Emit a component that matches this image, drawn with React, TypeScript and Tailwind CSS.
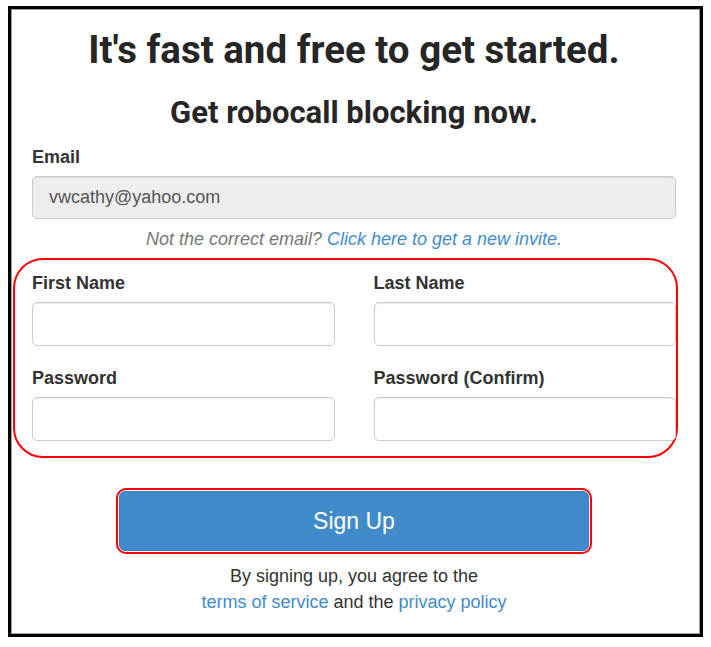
import React from "react";

const sans = { fontFamily: '"Liberation Sans", Arial, sans-serif' };

function Field({ label, mt }: { label: string; mt?: boolean }) {
  return (
    <div className={mt ? "mt-[22px]" : ""}>
      <div className="text-[18px] leading-[20px] font-bold text-[#333]">{label}</div>
      <input
        type="text"
        className="mt-[9px] block h-[44px] w-full rounded-[5px] border border-[#ccc] bg-white px-4 shadow-[inset_0_1px_1px_rgba(0,0,0,0.075)] outline-none"
      />
    </div>
  );
}

export default function App() {
  return (
    <div className="bg-white w-[711px] h-[647px] pt-[6px] pl-[8px]" style={sans}>
      <div className="w-[695px] h-[631px] border-[3px] border-black">
        <div className="h-full border border-[#a0a0a0] pl-[20px] pr-[23px] pt-[18px] flex flex-col">
          <h1
            className="text-center text-[38.5px] leading-[44px] font-bold text-[#262626]"
            style={{ fontFamily: 'Roboto, "Liberation Sans", sans-serif' }}
          >
            It's fast and free to get started.
          </h1>
          <h2
            className="mt-[23px] text-center text-[31px] leading-[36px] font-bold text-[#262626]"
            style={{ fontFamily: 'Roboto, "Liberation Sans", sans-serif' }}
          >
            Get robocall blocking now.
          </h2>
          <div className="mt-[16px] text-[18px] leading-[20px] font-bold text-[#333]">Email</div>
          <div className="mt-[9px] h-[43px] rounded-[5px] border border-[#ccc] bg-[#eee] px-[16px] flex items-center text-[18px] text-[#555] shadow-[inset_0_1px_1px_rgba(0,0,0,0.075)]">
            vwcathy@yahoo.com
          </div>
          <div className="mt-[10px] text-center text-[18px] leading-[20px] italic text-[#777]">
            Not the correct email? <span className="text-[#428bca]">Click here to get a new invite.</span>
          </div>
          <div className="mt-[9px] ml-[-19px] mr-[-2px] rounded-[30px] border-2 border-[#ff0000] pl-[17px] pt-[13px] pb-[15px]">
            <div className="grid grid-cols-2 gap-x-[39px]">
              <Field label="First Name" />
              <Field label="Last Name" />
              <Field label="Password" mt />
              <Field label="Password (Confirm)" mt />
            </div>
          </div>
          <div className="mt-[30px] self-center rounded-[10px] border-2 border-[#ff0000] p-[1px]">
            <button className="w-[470px] h-[60px] rounded-[6px] bg-[#428bca] border border-[#357ebd] text-white text-[23px]">
              Sign Up
            </button>
          </div>
          <div className="mt-[9px] text-center text-[18px] leading-[26px] text-[#333]">
            <div>By signing up, you agree to the</div>
            <div>
              <span className="text-[#428bca]">terms of service</span> and the{" "}
              <span className="text-[#428bca]">privacy policy</span>
            </div>
          </div>
        </div>
      </div>
    </div>
  );
}
